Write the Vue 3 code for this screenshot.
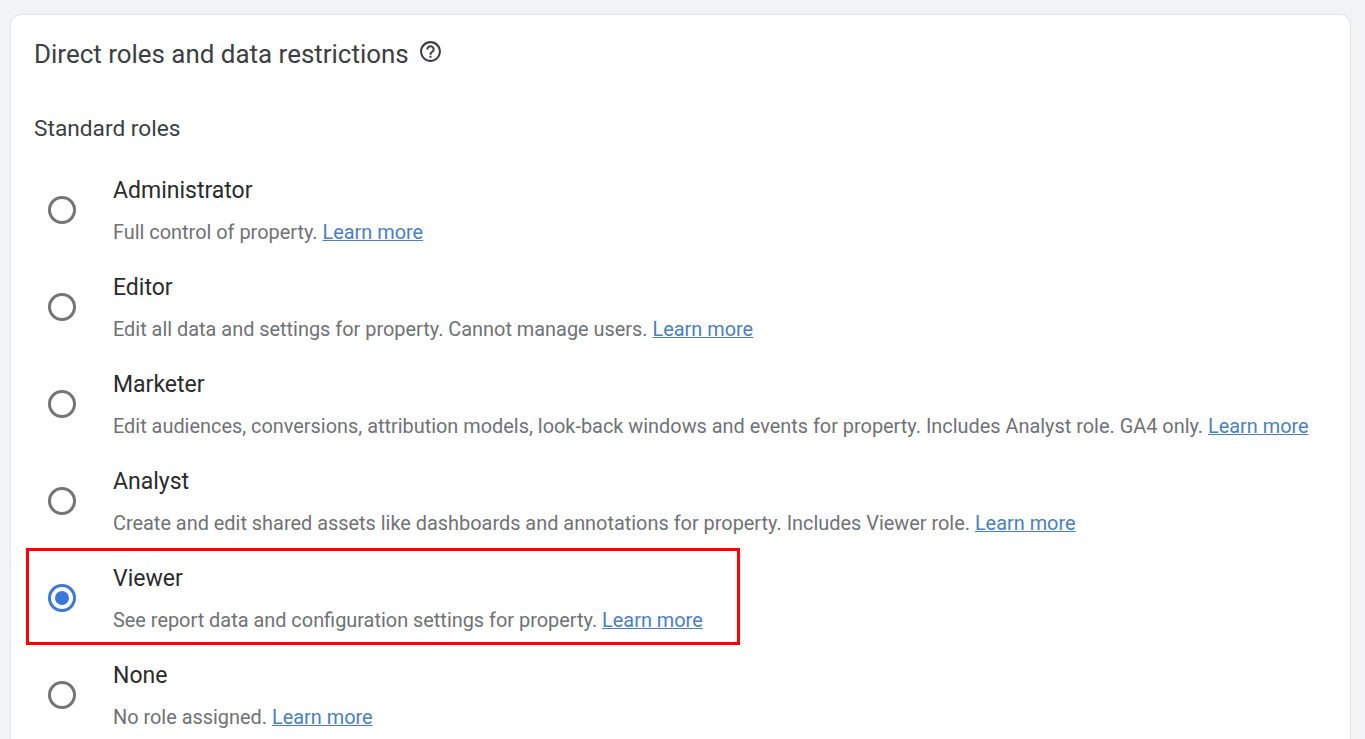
<script setup>
const roles = [
  { name: "Administrator", desc: "Full control of property." },
  { name: "Editor", desc: "Edit all data and settings for property. Cannot manage users." },
  { name: "Marketer", desc: "Edit audiences, conversions, attribution models, look-back windows and events for property. Includes Analyst role. GA4 only." },
  { name: "Analyst", desc: "Create and edit shared assets like dashboards and annotations for property. Includes Viewer role." },
  { name: "Viewer", desc: "See report data and configuration settings for property.", selected: true },
  { name: "None", desc: "No role assigned." },
]
</script>

<template>
  <div class="page">
    <div class="card">
      <div class="title-row">
        <h2 class="title">Direct roles and data restrictions</h2>
        <svg class="help" viewBox="0 0 24 24" width="25" height="25" fill="#3c4043">
          <path d="M11 18h2v-2h-2v2zm1-16C6.48 2 2 6.48 2 12s4.48 10 10 10 10-4.48 10-10S17.52 2 12 2zm0 18c-4.41 0-8-3.59-8-8s3.59-8 8-8 8 3.59 8 8-3.59 8-8 8zm0-14c-2.21 0-4 1.79-4 4h2c0-1.1.9-2 2-2s2 .9 2 2c0 2-3 1.75-3 5h2c0-2.25 3-2.5 3-5 0-2.21-1.79-4-4-4z" />
        </svg>
      </div>
      <div class="section">Standard roles</div>
      <div class="roles">
        <div v-for="role in roles" :key="role.name" class="role">
          <span class="radio" :class="{ on: role.selected }"></span>
          <div class="text">
            <div class="name">{{ role.name }}</div>
            <div class="desc">{{ role.desc }} <a class="link">Learn more</a></div>
          </div>
          <div v-if="role.selected" class="highlight"></div>
        </div>
      </div>
    </div>
  </div>
</template>

<style scoped>
.page {
  height: 739px;
  overflow: hidden;
  background: #f1f3f4;
  padding: 14px 14px 0 10px;
  box-sizing: border-box;
  font-family: Roboto, "Liberation Sans", sans-serif;
}
.card {
  background: #fff;
  border: 1px solid #e3e5e7;
  border-bottom: none;
  border-radius: 11px 11px 0 0;
  height: 740px;
  padding: 0 0 0 23px;
}
.title-row {
  display: flex;
  align-items: flex-start;
  height: 79px;
  gap: 9px;
}
.title {
  margin: 21px 0 0;
  font-size: 25.95px;
  line-height: 36px;
  font-weight: 400;
  color: #3c4043;
}
.help {
  margin-top: 24px;
}
.section {
  font-size: 22.7px;
  line-height: 30px;
  color: #3c4043;
  height: 48px;
  margin-top: 20px;
}
.role {
  position: relative;
  display: flex;
  align-items: center;
  height: 97px;
}
.radio {
  width: 28px;
  height: 28px;
  box-sizing: border-box;
  border: 3px solid #757575;
  border-radius: 50%;
  margin-left: 14px;
  flex: none;
  display: flex;
  align-items: center;
  justify-content: center;
  position: relative;
  top: -1px;
}
.radio.on {
  border-color: #3b78d8;
}
.radio.on::after {
  content: "";
  width: 14px;
  height: 14px;
  border-radius: 50%;
  background: #3b78d8;
}
.text {
  margin-left: 37px;
  padding-top: 3px;
}
.name {
  font-size: 23px;
  line-height: 30px;
  color: #2a2b2e;
}
.desc {
  margin-top: 12px;
  font-size: 19.9px;
  line-height: 30px;
  color: #6f7276;
  white-space: nowrap;
}
.link {
  color: #4a7fc1;
  text-decoration: underline;
}
.highlight {
  position: absolute;
  left: -8px;
  top: -2px;
  width: 714px;
  height: 97px;
  box-sizing: border-box;
  border: 3px solid #f00;
}
</style>

<style>
html, body { margin: 0; overflow: hidden; }
</style>
